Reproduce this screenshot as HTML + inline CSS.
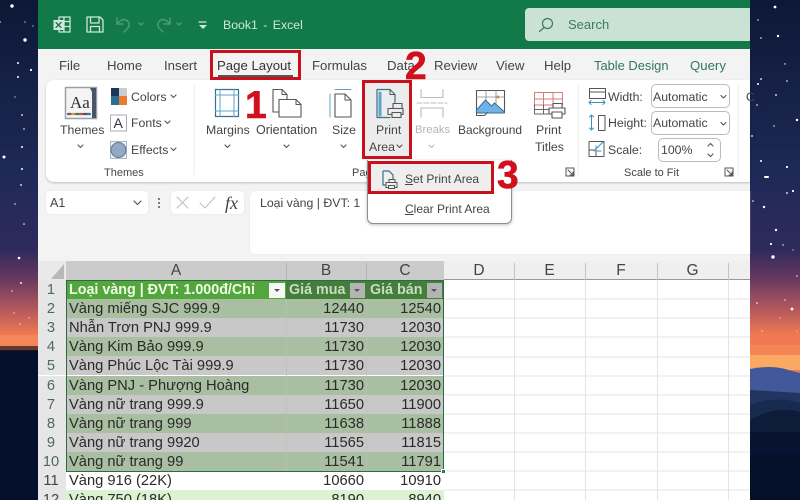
<!DOCTYPE html>
<html><head><meta charset="utf-8">
<style>
html,body{margin:0;padding:0;width:800px;height:500px;overflow:hidden;background:#0b1530}
body{font-family:"Liberation Sans","Noto Sans CJK SC",sans-serif;color:#333}
#p{position:absolute;left:0;top:0;width:800px;height:500px;overflow:hidden;filter:blur(.3px)}
.a{position:absolute}
.t{position:absolute;white-space:nowrap;font-size:12.3px;line-height:16px;color:#444}
.tab{font-size:13.2px;top:58px;color:#444}
.n{position:absolute;font-weight:bold;color:#d0101c;line-height:1}
.rb{position:absolute;border:3px solid #c8111c;box-sizing:border-box}
.r{position:absolute;left:38px;width:406px;height:19.1px;display:grid;grid-template-columns:28px 220px 80px 78px;grid-template-rows:19.1px;font-size:14.7px;line-height:21px;color:#2a2a2a}
.r div{white-space:nowrap;overflow:hidden}
.r div:nth-child(1){text-align:center;color:#4d6b57;background:#e6e6e6;padding-right:2px}
.r div:nth-child(2){padding-left:3px}
.r div:nth-child(3){text-align:right;padding-right:2px}
.r div:nth-child(4){text-align:right;padding-right:3px}
.g{background:#a9bfa2}.s{background:#c8c8c8}
.h{position:absolute;top:261px;height:19px;font-size:15.5px;line-height:20px;text-align:center;color:#444}
.sel{position:absolute;box-sizing:border-box;background:#fff;border:1px solid #bbb;border-radius:4px}
</style></head><body><div id="p">

<svg class="a" style="left:0;top:0" width="800" height="500">
<defs>
<linearGradient id="sky" x1="0" y1="0" x2="0" y2="1">
<stop offset="0" stop-color="#0c1836"/><stop offset=".36" stop-color="#1f2a57"/><stop offset=".5" stop-color="#2f2a5c"/>
<stop offset=".56" stop-color="#6a3a60"/><stop offset=".62" stop-color="#b5595c"/><stop offset=".67" stop-color="#ef7a52"/><stop offset="1" stop-color="#f07c52"/>
</linearGradient>
</defs>
<rect width="800" height="500" fill="url(#sky)"/>
<rect x="750" y="345" width="50" height="10" fill="#f58556"/>
<rect x="750" y="355" width="50" height="15" fill="#fba862"/>
<rect x="0" y="335" width="38" height="16" fill="#f4875a"/>
<rect x="0" y="350" width="38" height="150" fill="#04102b"/>
<path d="M750 369Q770 365 785 369T800 373V420H750Z" fill="#41599a"/>
<path d="M750 390L800 393V500H750Z" fill="#23355f"/>
<path d="M750 405Q775 395 800 403V500H750Z" fill="#172a50"/>
<path d="M750 420Q775 405 800 412V500H750Z" fill="#0e1c3a"/>
<path d="M750 432H800V500H750Z" fill="#071330"/>
<path d="M750 455H800V500H750Z" fill="#041029"/>
<g fill="#fff">
<circle cx="12" cy="6" r="1.7"/><circle cx="25" cy="40" r="1.7"/><circle cx="18" cy="63" r="1"/><circle cx="31" cy="70" r="1.1"/><circle cx="18" cy="77" r="1"/><circle cx="33" cy="26" r=".6"/><circle cx="25" cy="22" r=".6"/><circle cx="15" cy="97" r=".6"/><circle cx="22" cy="115" r=".9"/><circle cx="24" cy="129" r=".8"/><circle cx="22" cy="147" r="1"/><circle cx="4" cy="157" r="1.5"/><circle cx="22" cy="169" r="1"/><circle cx="21" cy="185" r=".9"/><circle cx="15" cy="204" r=".7"/><circle cx="24" cy="224" r=".8"/><circle cx="19" cy="258" r="1.3"/><circle cx="21" cy="283" r="1" opacity=".9"/><circle cx="12" cy="291" r=".8" opacity=".8"/><circle cx="14" cy="313" r=".8" opacity=".7"/><circle cx="29" cy="318" r=".8" opacity=".6"/><circle cx="20" cy="324" r="1" opacity=".4"/><circle cx="0" cy="22" r=".8"/>
<circle cx="775" cy="7" r="1.4"/><circle cx="758" cy="20" r=".7"/><circle cx="761" cy="38" r=".8"/><circle cx="778" cy="36" r="1.2"/><circle cx="785" cy="64" r=".7"/><circle cx="761" cy="79" r=".9"/><circle cx="758" cy="84" r="1"/><circle cx="787" cy="81" r=".8"/><circle cx="776" cy="95" r=".9"/><circle cx="757" cy="105" r=".8"/><circle cx="797" cy="120" r="1.2"/><circle cx="774" cy="126" r=".7"/><circle cx="752" cy="136" r=".9"/><circle cx="761" cy="161" r="1"/><circle cx="787" cy="167" r="1.1"/><rect x="764" y="176" width="5" height="2" rx="1"/><circle cx="793" cy="191" r="1.1"/><circle cx="787" cy="193" r=".9"/><circle cx="753" cy="201" r=".8"/><circle cx="764" cy="207" r="1.2"/><circle cx="776" cy="230" r="1.2"/><circle cx="771" cy="244" r="1.1"/><circle cx="783" cy="245" r=".7"/><circle cx="773" cy="257" r="1.7"/><circle cx="793" cy="250" r=".6"/><circle cx="797" cy="276" r=".7"/><circle cx="792" cy="309" r="1.5" opacity=".9"/><circle cx="785" cy="300" r=".8" opacity=".8"/><circle cx="757" cy="303" r="1" opacity=".6"/><circle cx="780" cy="318" r=".7" opacity=".6"/><circle cx="762" cy="331" r="1" opacity=".4"/><circle cx="797" cy="331" r=".8" opacity=".4"/>
</g>
<rect x="0" y="346" width="38" height="5" fill="#2a1a20" opacity=".7"/>
</svg>

<!-- window -->
<div class="a" style="left:37.5px;top:0;width:712.5px;height:500px;background:#f3f3f3"></div>
<div class="a" style="left:37.5px;top:0;width:712.5px;height:49px;background:#127a48"></div>
<div class="a" style="left:525px;top:8px;width:225px;height:33px;background:#c9e2d4;border-radius:4px 0 0 4px"></div>
<div class="a" style="left:46px;top:80px;width:704px;height:102px;background:#fff;border-radius:8px 0 0 8px;box-shadow:0 1px 2px rgba(0,0,0,.22)"></div>
<div class="a" style="left:46px;top:191px;width:102px;height:23px;background:#fff;border-radius:4px;box-shadow:0 0 1px #ccc"></div>
<div class="a" style="left:171px;top:191px;width:73px;height:23px;background:#fff;border-radius:4px;box-shadow:0 0 1px #ccc"></div>
<div class="a" style="left:250px;top:191px;width:500px;height:63px;background:#fff;border-radius:5px 0 0 5px;box-shadow:0 0 1px #ccc"></div>

<!-- grid -->
<div class="a" style="left:38px;top:261px;width:712px;height:239px;background:#fff"></div>
<div class="a" style="left:38px;top:261px;width:28px;height:19px;background:#e9e9e9"></div>
<div class="a" style="left:66px;top:261px;width:378px;height:19px;background:#cbcbcb"></div>
<div class="a" style="left:444px;top:261px;width:306px;height:19px;background:#efefef;border-bottom:1px solid #999;box-sizing:border-box"></div>
<svg class="a" style="left:0;top:0" width="800" height="500">
<path d="M64 264V279H51Z" fill="#b8b8b8"/>
<g stroke="#b5b5b5"><path d="M286.5 263V280M366.5 263V280"/></g>
<g stroke="#c4c4c4"><path d="M514.5 263V280M585.5 263V280M657.5 263V280M728.5 263V280"/></g>
<g stroke="#e4e4e4"><path d="M514.5 280V500M585.5 280V500M657.5 280V500M728.5 280V500M444 299H750M444 318H750M444 337H750M444 357H750M444 376H750M444 395H750M444 414H750M444 433H750M444 452H750M444 471H750M444 490H750"/></g>
</svg>
<div class="h" style="left:66px;width:220px">A</div>
<div class="h" style="left:286px;width:80px">B</div>
<div class="h" style="left:366px;width:78px">C</div>
<div class="h" style="left:444px;width:70px">D</div>
<div class="h" style="left:514px;width:71px">E</div>
<div class="h" style="left:585px;width:72px">F</div>
<div class="h" style="left:657px;width:71px">G</div>

<div class="r" style="top:280px;font-weight:bold;font-size:14.3px;color:#e8f5e0"><div style="font-weight:normal;font-size:14.7px">1</div><div style="background:#52a63c;color:#eefbe6">Loại vàng | ĐVT: 1.000đ/Chỉ</div><div style="background:#437e3a;text-align:left;padding-left:3px;color:#c9dcc2">Giá mua</div><div style="background:#437e3a;text-align:left;padding-left:4px;color:#c9dcc2">Giá bán</div></div>
<div class="r" style="top:299.1px"><div>2</div><div class="g">Vàng miếng SJC 999.9</div><div class="g">12440</div><div class="g">12540</div></div>
<div class="r" style="top:318.2px"><div>3</div><div class="s">Nhẫn Trơn PNJ 999.9</div><div class="s">11730</div><div class="s">12030</div></div>
<div class="r" style="top:337.3px"><div>4</div><div class="g">Vàng Kim Bảo 999.9</div><div class="g">11730</div><div class="g">12030</div></div>
<div class="r" style="top:356.4px"><div>5</div><div class="s">Vàng Phúc Lộc Tài 999.9</div><div class="s">11730</div><div class="s">12030</div></div>
<div class="r" style="top:375.5px"><div>6</div><div class="g">Vàng PNJ - Phượng Hoàng</div><div class="g">11730</div><div class="g">12030</div></div>
<div class="r" style="top:394.6px"><div>7</div><div class="s">Vàng nữ trang 999.9</div><div class="s">11650</div><div class="s">11900</div></div>
<div class="r" style="top:413.7px"><div>8</div><div class="g">Vàng nữ trang 999</div><div class="g">11638</div><div class="g">11888</div></div>
<div class="r" style="top:432.8px"><div>9</div><div class="s">Vàng nữ trang 9920</div><div class="s">11565</div><div class="s">11815</div></div>
<div class="r" style="top:451.9px"><div>10</div><div class="g">Vàng nữ trang 99</div><div class="g">11541</div><div class="g">11791</div></div>
<div class="r" style="top:471px"><div style="color:#444">11</div><div style="background:#fff">Vàng 916 (22K)</div><div style="background:#fff">10660</div><div style="background:#fff">10910</div></div>
<div class="r" style="top:490.1px"><div style="color:#444">12</div><div style="background:#dcf2d2">Vàng 750 (18K)</div><div style="background:#dcf2d2">8190</div><div style="background:#dcf2d2">8940</div></div>

<div class="a" style="left:66px;top:280px;width:378px;height:191.5px;border:1px solid #2b6a45;box-sizing:border-box"></div>
<div class="a" style="left:440.5px;top:469px;width:5px;height:5px;background:#2b7a50;border:1px solid #fff;box-sizing:border-box"></div>
<svg class="a" style="left:0;top:0" width="800" height="500">
<rect x="269" y="283" width="16" height="15" fill="#f7f7f7"/><path d="M274 289h6l-3 3z" fill="#555"/>
<rect x="350" y="283" width="15" height="15" fill="#b4b4b4"/><path d="M354 289h6l-3 3z" fill="#555"/>
<rect x="427" y="283" width="15" height="15" fill="#b4b4b4"/><path d="M431 289h6l-3 3z" fill="#555"/>
<path d="M286.5 299V471M366.5 299V471" stroke="#b5c5b0" stroke-width=".7"/>
</svg>

<!-- title bar text -->
<div class="t" style="left:223px;top:17px;font-size:12.3px;color:#cfe8da;word-spacing:2px">Book1 - Excel</div>
<div class="t" style="left:568px;top:17px;font-size:13px;color:#3f7a5c">Search</div>

<!-- tabs -->
<div class="t tab" style="left:59px">File</div>
<div class="t tab" style="left:107px">Home</div>
<div class="t tab" style="left:164px">Insert</div>
<div class="t tab" style="left:217px;color:#333;font-weight:500">Page Layout</div>
<div class="t tab" style="left:312px">Formulas</div>
<div class="t tab" style="left:387px">Data</div>
<div class="t tab" style="left:434px">Review</div>
<div class="t tab" style="left:496px">View</div>
<div class="t tab" style="left:544px">Help</div>
<div class="t tab" style="left:594px;color:#2f7a58;font-size:12.9px">Table Design</div>
<div class="t tab" style="left:690px;color:#2f7a58">Query</div>
<div class="a" style="left:218px;top:75px;width:75px;height:1.5px;background:#555"></div>

<!-- ribbon labels -->
<div class="t" style="left:60px;top:122px">Themes</div>
<div class="t" style="left:131px;top:89px">Colors</div>
<div class="t" style="left:131px;top:115px">Fonts</div>
<div class="t" style="left:131px;top:142px">Effects</div>
<div class="t" style="left:104px;top:165px;font-size:11px">Themes</div>
<div class="t" style="left:206px;top:122px">Margins</div>
<div class="t" style="left:256px;top:122px;font-size:12.5px">Orientation</div>
<div class="t" style="left:332px;top:122px">Size</div>
<div class="t" style="left:352px;top:165px;font-size:11px">Page Setup</div>
<div class="t" style="left:415px;top:122px;color:#b5b5b5;font-size:11.3px">Breaks</div>
<div class="t" style="left:458px;top:122px;font-size:12px">Background</div>
<div class="t" style="left:536px;top:122px">Print</div>
<div class="t" style="left:535px;top:139px">Titles</div>
<div class="t" style="left:608px;top:89px">Width:</div>
<div class="t" style="left:608px;top:115px">Height:</div>
<div class="t" style="left:608px;top:142px">Scale:</div>
<div class="t" style="left:624px;top:165px;font-size:11px">Scale to Fit</div>
<div class="t" style="left:746px;top:89px">C</div>

<div class="sel" style="left:651px;top:84px;width:79px;height:24px;border-radius:5px"></div>
<div class="sel" style="left:651px;top:111px;width:79px;height:24px;border-radius:5px"></div>
<div class="sel" style="left:658px;top:138px;width:63px;height:24px;border-radius:5px"></div>
<div class="t" style="left:653px;top:89px">Automatic</div>
<div class="t" style="left:653px;top:115px">Automatic</div>
<div class="t" style="left:661px;top:142px">100%</div>

<!-- print area highlighted -->
<div class="a" style="left:365px;top:83px;width:44px;height:73px;background:#ececec"></div>
<div class="t" style="left:376px;top:122px">Print</div>
<div class="t" style="left:369px;top:139px">Area</div>

<!-- formula -->
<div class="t" style="left:50px;top:195px;font-size:12.5px">A1</div>
<div class="t" style="left:260px;top:195px;font-size:12.3px">Loại vàng | ĐVT: 1</div>
<div class="t" style="left:225px;top:192px;font:italic 18px 'Liberation Serif',serif;line-height:22px;color:#444">fx</div>

<!-- icons -->
<svg class="a" style="left:0;top:0" width="800" height="500" fill="none" stroke-linecap="round" stroke-linejoin="round">
<!-- excel -->
<g stroke="#cfe8da" stroke-width="1.3"><rect x="59" y="17" width="11" height="15"/><path d="M59 21.5h11M59 26.5h11M64 17v15"/></g>
<rect x="53.5" y="20" width="10" height="10" fill="#cfe8da"/><path d="M56 22.5l5 5M61 22.5l-5 5" stroke="#127a48" stroke-width="1.3"/>
<!-- save -->
<g stroke="#cfe8da" stroke-width="1.3"><path d="M87 17h13l3 3v12H87z"/><path d="M90.5 17v6h8.5v-6M90.5 32v-5.5h9V32"/></g>
<!-- undo redo -->
<g stroke="#4e9c76" stroke-width="1.4"><path d="M117 24V18M117 24h6M117 24q5-6 9-4q5 3 2 8l-4 4"/><path d="M139 23l2 2 2-2"/>
<path d="M170 24V18M170 24h-6M170 24q-5-6-9-4q-5 3-2 8l4 4"/><path d="M177 23l2 2 2-2"/></g>
<g stroke="#cfe8da" stroke-width="1.2"><path d="M199 22h7"/></g><path d="M199 25h8l-4 4z" fill="#cfe8da"/>
<!-- search -->
<g stroke="#3f7a5c" stroke-width="1.2"><circle cx="547.5" cy="23.5" r="5"/><path d="M544 27.5L539.5 31.5"/></g>

<!-- themes icon -->
<rect x="65.5" y="87.5" width="31" height="31" fill="#f4f4f4" stroke="#98a0a8" stroke-width="1.5"/>
<path d="M90 88h6v30h-4v-26z" fill="#4a5468"/>
<text x="70" y="108" font-family="Liberation Serif,serif" font-size="17" fill="#333">Aa</text>
<g stroke-width="2.2"><path d="M68 114h3" stroke="#7c4a8c"/><path d="M72 114h3" stroke="#c9a227"/><path d="M76 114h3" stroke="#3f7a5c"/><path d="M80 114h3" stroke="#c0504d"/><path d="M84 114h3" stroke="#4a5468"/><path d="M88 114h2" stroke="#3c76a8"/></g>
<!-- colors -->
<rect x="111" y="88" width="8" height="8" fill="#17375e" stroke="none"/><rect x="119" y="88" width="8" height="8" fill="#ccc" stroke="none"/><rect x="111" y="96" width="8" height="9" fill="#2a6f8c" stroke="none"/><rect x="119" y="96" width="8" height="9" fill="#e87a33" stroke="none"/>
<!-- fonts -->
<rect x="110.5" y="115" width="16" height="16" stroke="#aab" fill="#fff"/>
<text x="113.5" y="128" font-family="Liberation Sans,sans-serif" font-size="14" fill="#333">A</text>
<!-- effects -->
<rect x="110.5" y="141.5" width="16" height="17" stroke="#a9b6c6" fill="#eef2f6"/><circle cx="118.5" cy="150" r="7.5" fill="#93a9c6" stroke="#5f7592"/>
<!-- margin -->
<rect x="215.5" y="89.5" width="23" height="27" stroke="#3a6f8f" stroke-width="1.2" fill="#fff"/>
<path d="M220 89.5v27M234 89.5v27M215.5 95h23M215.5 111h23" stroke="#5da3cc" stroke-width="1"/>
<!-- orientation -->
<path d="M273 89.5h9l5 5V112H273z" stroke="#555" stroke-width="1.1"/><path d="M282 89.5v5h5" stroke="#555"/>
<path d="M279 99.5h17l5 5V117H279z" stroke="#555" stroke-width="1.1" fill="#fff"/><path d="M296 99.5v5h5" stroke="#555"/>
<!-- size -->
<path d="M335 89.5h16M330 94v23" stroke="#5da3cc" stroke-width="1"/>
<path d="M335 94h10l6 6v17h-16z" stroke="#555" stroke-width="1.1" fill="#fff"/><path d="M345 94v6h6" stroke="#555"/>
<!-- print area -->
<path d="M377 89.5h13l5 5v8M377 89.5v28h13" stroke="#3a6f8f" stroke-width="1.2"/><path d="M380 93v22" stroke="#5da3cc" stroke-width="3"/>
<path d="M390 89.5v5h5" stroke="#555"/>
<g stroke="#555" stroke-width="1.1" fill="#ececec"><rect x="393" y="103.5" width="9" height="5"/><rect x="388" y="108.5" width="15" height="6"/><rect x="392" y="112.5" width="9" height="5"/></g>
<!-- breaks -->
<g stroke="#bbb" stroke-width="1.1"><path d="M421 89.5v8h22v-8"/><path d="M421 117v-9h22v9"/><path d="M417 103h30" stroke-dasharray="5 2"/></g>
<!-- background -->
<rect x="476.5" y="90.5" width="28" height="22" stroke="#555" stroke-width="1.1"/><path d="M476.5 97h28M486 90.5v22M496 90.5v22" stroke="#888" stroke-width=".8"/>
<path d="M476.5 110l9-10 6 6 3-3 10 9v1H476.5z" fill="#6eb2e8" stroke="#3a6f8f"/><circle cx="498" cy="97" r="1.5" fill="#d98a3a" stroke="none"/><path d="M476.5 112.5v3h8l3-3" stroke="#555"/>
<!-- titles -->
<g stroke="#d97a7a" stroke-width="1"><rect x="534.5" y="92.5" width="28" height="12.5"/><path d="M543.5 92.5v12.5M553 92.5v12.5M534.5 99h28"/></g>
<g stroke="#666" stroke-width="1"><path d="M534.5 105v9h14M543.5 105v9M534.5 109.5h14"/></g>
<g stroke="#555" stroke-width="1.1" fill="#fff"><rect x="553" y="103.5" width="9" height="5"/><rect x="549" y="108" width="16" height="6"/><rect x="552" y="112" width="10" height="6"/></g>
<!-- launchers -->
<g stroke="#555" stroke-width="1"><path d="M566 168h8v8h-8zM568 170l5 5M573 172v3h-3"/><path d="M725 168h8v8h-8zM727 170l5 5M732 172v3h-3"/></g>
<!-- width height scale -->
<rect x="589.5" y="88.5" width="16" height="10" stroke="#555"/><path d="M589.5 92h16" stroke="#555"/><path d="M589 102.5h16M589 102.5l2-2M589 102.5l2 2M605 102.5l-2-2M605 102.5l-2 2" stroke="#3a8fc0"/>
<rect x="598.5" y="115.5" width="6.5" height="15" stroke="#555"/><path d="M591.5 115v15M591.5 115l-2 2M591.5 115l2 2M591.5 130l-2-2M591.5 130l2-2" stroke="#3a8fc0"/>
<path d="M589 141.5h15v15h-15zM589 150h7v6.5" stroke="#555"/><path d="M603 142l-9 9M596 146v5h5" stroke="#3a8fc0"/>
<!-- chevrons -->
<g stroke="#555" stroke-width="1.1">
<path d="M78 145l2.5 2.5L83 145M171 95l2.5 2.5L176 95M165 121l2.5 2.5L170 121M171 148l2.5 2.5L176 148M225 145l2.5 2.5L230 145M284 145l2.5 2.5L289 145M341 145l2.5 2.5L346 145M397 145l2.5 2.5L402 145M721 95.5l2.500 2.5 2.500-2.5M721 122.5l2.500 2.5 2.500-2.5M708 146l2.500-2.500 2.500 2.500M708 154l2.500 2.500 2.500-2.500"/>
<path d="M429 145l2.5 2.5L434 145" stroke="#bbb"/>
<path d="M134 201l3.5 3.5L141 201" stroke-width="1.2"/>
</g>
<g fill="#555"><circle cx="159" cy="199" r="1"/><circle cx="159" cy="203" r="1"/><circle cx="159" cy="207" r="1"/></g>
<path d="M177 197l11 11M188 197l-11 11M200 203l5 5 10-11" stroke="#bdbdbd" stroke-width="1"/>
<path d="M194 85v90M578 85v90M738 85v90" stroke="#e8e8e8"/>
</svg>

<!-- popup menu -->
<div class="a" style="left:367px;top:160px;width:145px;height:64px;background:#fff;border:1px solid #8f8f8f;border-top:0;border-radius:0 0 6px 6px;box-sizing:border-box;box-shadow:0 1px 3px rgba(0,0,0,.25)"></div>
<div class="a" style="left:370px;top:163px;width:121px;height:28px;background:#eee"></div>
<div class="t" style="left:405px;top:171px;font-size:12px"><u>S</u>et Print Area</div>
<div class="t" style="left:405px;top:201px;font-size:12px"><u>C</u>lear Print Area</div>
<svg class="a" style="left:0;top:0" width="800" height="500" fill="none">
<path d="M383 171h6l4 4v5M383 171v14h5" stroke="#3a6f8f" stroke-width="1.2"/>
<g stroke="#555" fill="#eee"><rect x="389" y="179.5" width="6" height="3"/><rect x="386" y="182.5" width="11" height="5"/><rect x="388.5" y="185.5" width="6" height="3"/></g>
</svg>

<!-- red annotation -->
<div class="rb" style="left:210px;top:50px;width:91px;height:30px"></div>
<div class="rb" style="left:362px;top:80px;width:50px;height:79px"></div>
<div class="rb" style="left:368px;top:161px;width:126px;height:33px"></div>
<div class="n" style="left:245px;top:86px;font-size:39px;-webkit-text-stroke:.6px #d0101c">1</div>
<div class="n" style="left:405px;top:47px;font-size:39px;-webkit-text-stroke:.6px #d0101c">2</div>
<div class="n" style="left:497px;top:156px;font-size:39px;-webkit-text-stroke:.6px #d0101c">3</div>

</div></body></html>
